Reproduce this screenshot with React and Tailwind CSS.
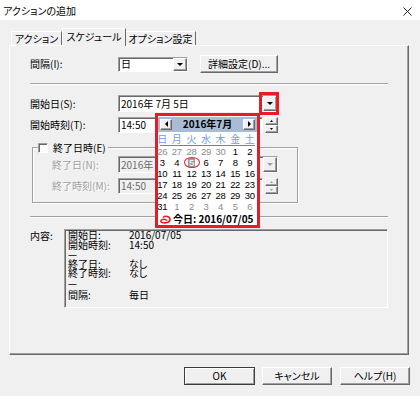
import React from "react";

const raised =
  "border border-t-white border-l-white border-r-[#696969] border-b-[#696969] shadow-[inset_-1px_-1px_0_#a0a0a0]";
const sunken =
  "border border-t-[#a0a0a0] border-l-[#a0a0a0] border-r-white border-b-white shadow-[inset_1px_1px_0_#696969]";

const Tri = ({ dir = "down", color = "#000", w = 7, h = 4 }) => {
  const pts = {
    down: `0,0 ${w},0 ${w / 2},${h}`,
    up: `0,${h} ${w},${h} ${w / 2},0`,
    left: `${h},0 ${h},${w} 0,${w / 2}`,
    right: `0,0 0,${w} ${h},${w / 2}`,
  }[dir];
  const vw = dir === "left" || dir === "right" ? h : w;
  const vh = dir === "left" || dir === "right" ? w : h;
  return (
    <svg width={vw} height={vh} viewBox={`0 0 ${vw} ${vh}`}>
      <polygon points={pts} fill={color} />
    </svg>
  );
};

const Spinner = ({ disabled }) => (
  <div className="ml-[2px] w-[13px] h-[16px] flex flex-col">
    <div className={`${raised} h-[8px] bg-[#f0f0f0] flex items-center justify-center`}>
      <Tri dir="up" w={3} h={2} color={disabled ? "#a0a0a0" : "#000"} />
    </div>
    <div className={`${raised} h-[8px] bg-[#f0f0f0] flex items-center justify-center`}>
      <Tri dir="down" w={3} h={2} color={disabled ? "#a0a0a0" : "#000"} />
    </div>
  </div>
);

const Separator = ({ className = "" }) => (
  <div className={`w-[358px] h-0 border-t border-t-[#a0a0a0] border-b border-b-white ${className}`} />
);

const prevDays = [26, 27, 28, 29, 30];
const weeks = [
  [26, 27, 28, 29, 30, 1, 2],
  [3, 4, 5, 6, 7, 8, 9],
  [10, 11, 12, 13, 14, 15, 16],
  [17, 18, 19, 20, 21, 22, 23],
  [24, 25, 26, 27, 28, 29, 30],
  [31, 1, 2, 3, 4, 5, 6],
];

function Calendar() {
  return (
    <div className="absolute left-[155px] top-[113px] w-[105px] h-[115px] border-[3px] border-[#e41e26] bg-white flex flex-col">
      <div className="mt-px h-[16px] bg-[#a9bcd6] flex items-center justify-between px-[2px]">
        <div className={`${raised} w-[12px] h-[11px] bg-[#f0f0f0] flex items-center justify-center`}>
          <Tri dir="left" w={6} h={3} />
        </div>
        <span className="font-bold leading-[12px]">2016年7月</span>
        <div className={`${raised} w-[12px] h-[11px] bg-[#f0f0f0] flex items-center justify-center`}>
          <Tri dir="right" w={6} h={3} />
        </div>
      </div>
      <div className="-ml-[3px] w-[102px] h-[14px] grid grid-cols-7 items-center text-center text-[#6f9de0] leading-[12px]">
        {["日", "月", "火", "水", "木", "金", "土"].map((d) => (
          <span key={d}>{d}</span>
        ))}
      </div>
      <div className="mx-[2px] h-px bg-[#808080]" />
      <div className="-ml-[3px] w-[102px] flex flex-col font-['Liberation_Sans',sans-serif] text-[9.5px] tracking-[-0.3px]">
        {weeks.map((wk, wi) => (
          <div key={wi} className="grid grid-cols-7 h-[11px] items-center text-center leading-[11px]">
            {wk.map((d, di) => {
              const gray =
                (wi === 0 && prevDays.includes(d)) || (wi === 5 && di > 0);
              if (wi === 1 && d === 5) {
                return (
                  <span key={di} className="relative flex justify-center">
                    <span className="bg-[#9c9c9c] text-white px-[1px] leading-[9px]">5</span>
                    <span className="absolute left-[0px] -top-[1px] w-[16px] h-[11px] rounded-[50%] border-[1.5px] border-[#e41e26]" />
                  </span>
                );
              }
              return (
                <span key={di} className={gray ? "text-[#8c8c8c]" : "text-black"}>
                  {d}
                </span>
              );
            })}
          </div>
        ))}
      </div>
      <div className="h-[12px] mt-[1px] flex items-center pl-[2px] gap-[2px]">
        <svg width="11" height="9" viewBox="0 0 11 9">
          <path
            d="M3 2.5 C5 0.5 10 1 10 4.5 C10 7.5 5 8.5 2 7.5 C0.5 7 0.5 5 2.5 4.5 C4 4 6 4.5 7 5.5"
            fill="none"
            stroke="#e41e26"
            strokeWidth="1.6"
          />
        </svg>
        <span className="font-bold leading-[12px]">今日: 2016/07/05</span>
      </div>
    </div>
  );
}

export default function App() {
  return (
    <div className="relative w-[420px] h-[396px] overflow-hidden bg-[#f0f0f0] text-black text-[10px] leading-[12px] font-['Noto_Sans_CJK_JP',sans-serif] [font-feature-settings:'palt']">
      {/* title bar */}
      <div className="h-[20px] bg-white flex items-center justify-between pl-[3px] pr-[8px] pt-[2px]">
        <span className="text-[10px]">アクションの追加</span>
        <svg width="9" height="9" viewBox="0 0 9 9">
          <path d="M0.5 0.5L8.5 8.5M8.5 0.5L0.5 8.5" stroke="#222" strokeWidth="1" />
        </svg>
      </div>

      {/* tabs */}
      <div className="h-[25px] flex items-end pl-[11px]">
        <div className="w-[51px] h-[14px] border-t border-l border-t-white border-l-white border-r border-r-[#696969] flex items-center justify-center">
          アクション
        </div>
        <div className="relative z-10 -mb-px w-[64px] h-[18px] bg-[#f0f0f0] border-t border-l border-t-white border-l-white border-r border-r-[#696969] flex items-center justify-center pb-[2px]">
          スケジュール
        </div>
        <div className="w-[70px] h-[14px] border-t border-t-white border-r border-r-[#696969] flex items-center justify-center">
          オプション設定
        </div>
      </div>

      {/* panel */}
      <div className={`ml-[9px] w-[400px] h-[310px] ${raised} pl-[20px] pt-[9px] flex flex-col`}>
        <div className="flex items-center h-[18px]">
          <span className="w-[88px]">間隔(I):</span>
          <div className={`w-[70px] h-[15px] bg-white ${sunken} flex items-center`}>
            <span className="flex-1 pl-[2px]">日</span>
            <div className={`${raised} w-[14px] h-[13px] bg-[#f0f0f0] flex items-center justify-center`}>
              <Tri w={6} h={3} />
            </div>
          </div>
          <div className={`ml-[12px] w-[78px] h-[18px] ${raised} bg-[#f0f0f0] flex items-center justify-center`}>
            詳細設定(D)...
          </div>
        </div>

        <Separator className="mt-[10px]" />

        <div className="mt-[10px] flex items-center h-[17px]">
          <span className="w-[88px]">開始日(S):</span>
          <div className={`w-[160px] h-[17px] bg-white ${sunken} flex items-center`}>
            <span className="flex-1 pl-[2px]">2016年 7月 5日</span>
            <div className={`${raised} w-[14px] h-[15px] bg-[#f0f0f0] flex items-center justify-center`}>
              <Tri w={6} h={3} />
            </div>
          </div>
        </div>

        <div className="mt-[5px] flex items-center h-[16px]">
          <span className="w-[88px]">開始時刻(T):</span>
          <div className={`w-[145px] h-[16px] bg-white ${sunken} flex items-center pl-[2px]`}>14:50</div>
          <Spinner />
        </div>

        <div className="mt-[14px] ml-[2px] w-[266px] h-[56px] border border-[#a0a0a0] shadow-[inset_1px_1px_0_#fff,1px_1px_0_#fff] flex flex-col">
          <div className="-mt-[7px] ml-[5px] w-fit h-[13px] bg-[#f0f0f0] flex items-center gap-[5px] pr-[2px]">
            <div className={`w-[10px] h-[10px] bg-white ${sunken}`} />
            <span>終了日時(E)</span>
          </div>
          <div className="mt-[2px] flex items-center h-[17px]">
            <span className="w-[85px] pl-[19px] text-[#a0a0a0] [text-shadow:1px_1px_0_#fff]">終了日(N):</span>
            <div className={`w-[160px] h-[17px] bg-[#f0f0f0] ${sunken} flex items-center text-[#6d6d6d]`}>
              <span className="flex-1 pl-[2px]">2016年 7月 5日</span>
              <div className={`${raised} w-[14px] h-[15px] bg-[#f0f0f0] flex items-center justify-center`}>
                <Tri w={6} h={3} color="#a0a0a0" />
              </div>
            </div>
          </div>
          <div className="mt-[5px] flex items-center h-[16px]">
            <span className="w-[85px] pl-[19px] text-[#a0a0a0] [text-shadow:1px_1px_0_#fff]">終了時刻(M):</span>
            <div className={`w-[145px] h-[16px] bg-[#f0f0f0] ${sunken} flex items-center pl-[2px] text-[#6d6d6d]`}>
              14:50
            </div>
            <Spinner disabled />
          </div>
        </div>

        <Separator className="mt-[13px]" />

        <div className="mt-[11px] flex items-start">
          <span className="w-[34px] pt-[1px]">内容:</span>
          <div className={`w-[324px] h-[79px] ${sunken} pl-[3px] flex flex-col leading-[9.5px]`}>
            <div className="flex"><span className="w-[61px]">開始日:</span><span>2016/07/05</span></div>
            <div className="flex"><span className="w-[61px]">開始時刻:</span><span>14:50</span></div>
            <div className="flex"><span className="w-[61px]">—</span></div>
            <div className="flex"><span className="w-[61px]">終了日:</span><span>なし</span></div>
            <div className="flex"><span className="w-[61px]">終了時刻:</span><span>なし</span></div>
            <div className="flex"><span className="w-[61px]">—</span></div>
            <div className="flex mt-[3px]"><span className="w-[61px]">間隔:</span><span>毎日</span></div>
          </div>
        </div>
      </div>

      {/* buttons */}
      <div className="mt-[12px] flex justify-end pr-[10px]">
        <div className="w-[71px] h-[18px] border border-[#3c3c3c] bg-[#f0f0f0] shadow-[inset_1px_1px_0_#fff,inset_-1px_-1px_0_#a0a0a0] flex items-center justify-center">
          OK
        </div>
        <div className={`ml-[7px] w-[70px] h-[18px] ${raised} bg-[#f0f0f0] flex items-center justify-center`}>
          キャンセル
        </div>
        <div className={`ml-[8px] w-[70px] h-[18px] ${raised} bg-[#f0f0f0] flex items-center justify-center`}>
          ヘルプ(H)
        </div>
      </div>

      {/* overlays */}
      <Calendar />
      <div className="absolute left-[259px] top-[92px] w-[20px] h-[23px] border-[3px] border-[#e41e26]" />
    </div>
  );
}
